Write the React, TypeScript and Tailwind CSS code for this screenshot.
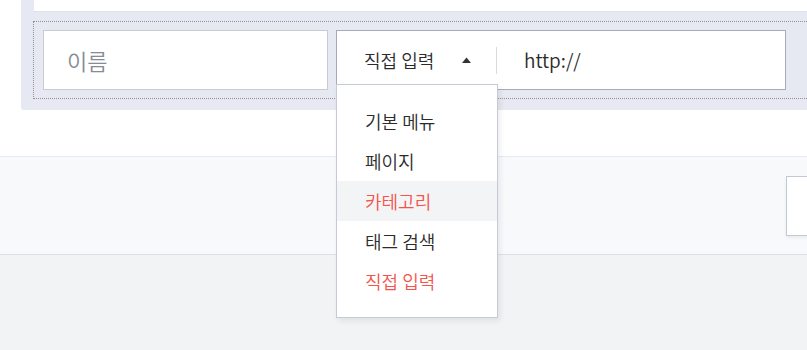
const FONT = "font-['Noto_Sans_CJK_KR','Noto_Sans',sans-serif]"

interface MenuItem {
  label: string
  red?: boolean
  active?: boolean
}

const MENU: MenuItem[] = [
  { label: '기본 메뉴' },
  { label: '페이지' },
  { label: '카테고리', red: true, active: true },
  { label: '태그 검색' },
  { label: '직접 입력', red: true },
]

function Caret() {
  return (
    <svg width="9" height="6" viewBox="0 0 9 6" className="text-[#333]" aria-hidden>
      <polygon points="0,6 4.5,0.5 9,6" fill="currentColor" />
    </svg>
  )
}

function Dropdown() {
  return (
    <div className="absolute left-[-1px] top-[53px] z-10 w-[162px] border border-[#c5cbd6] bg-white py-4 shadow-[2px_3px_6px_rgba(0,0,0,0.08)]">
      {MENU.map((m) => (
        <div
          key={m.label}
          className={`flex h-10 items-center pl-[28px] text-[18px] ${m.active ? 'bg-[#f3f4f6]' : ''} ${
            m.red ? 'text-[#f4544b]' : 'text-[#2b2b2b]'
          }`}
        >
          {m.label}
        </div>
      ))}
    </div>
  )
}

export default function App() {
  return (
    <div className={`relative h-[350px] w-[807px] overflow-hidden bg-[#f2f3f5] font-[350] ${FONT}`}>
      {/* top area */}
      <div className="h-[156px] bg-white">
        <div className="ml-[21px] w-[830px] rounded-bl-[3px] bg-[#e6e9f1] pb-[11px] pl-3">
          <div className="ml-px h-3 border-b border-[#dde1e9] bg-white" />
          <div className="mt-[9px] flex gap-2 border border-dotted border-[#8d929b] px-[9px] py-2">
            {/* name */}
            <div className="flex h-[60px] w-[285px] shrink-0 items-center border border-[#c6cbd4] bg-white pl-[23px] text-[22px] text-[#858a93]">
              이름
            </div>
            {/* link */}
            <div className="relative flex h-[60px] w-[450px] shrink-0 items-center border border-[#a6abb5] bg-white">
              <div className="flex w-[159px] items-center justify-between pl-[27px] pr-[25px] text-[18px] text-[#2b2b2b]">
                <span>직접 입력</span>
                <Caret />
              </div>
              <div className="h-[27px] w-px bg-[#d6dbe3]" />
              <div className="pl-[27px] text-[19px] text-[#2b2b2b]">http://</div>
              <Dropdown />
            </div>
          </div>
        </div>
      </div>

      {/* bottom band */}
      <div className="flex h-[99px] items-center border-y border-t-[#e8ebf0] border-b-[#dcdfe6] bg-[#f8f9fb] pl-[786px]">
        <div className="h-[60px] w-[200px] shrink-0 border border-[#c3c9d4] bg-white shadow-[0_2px_3px_rgba(0,0,0,0.06)]" />
      </div>
    </div>
  )
}
